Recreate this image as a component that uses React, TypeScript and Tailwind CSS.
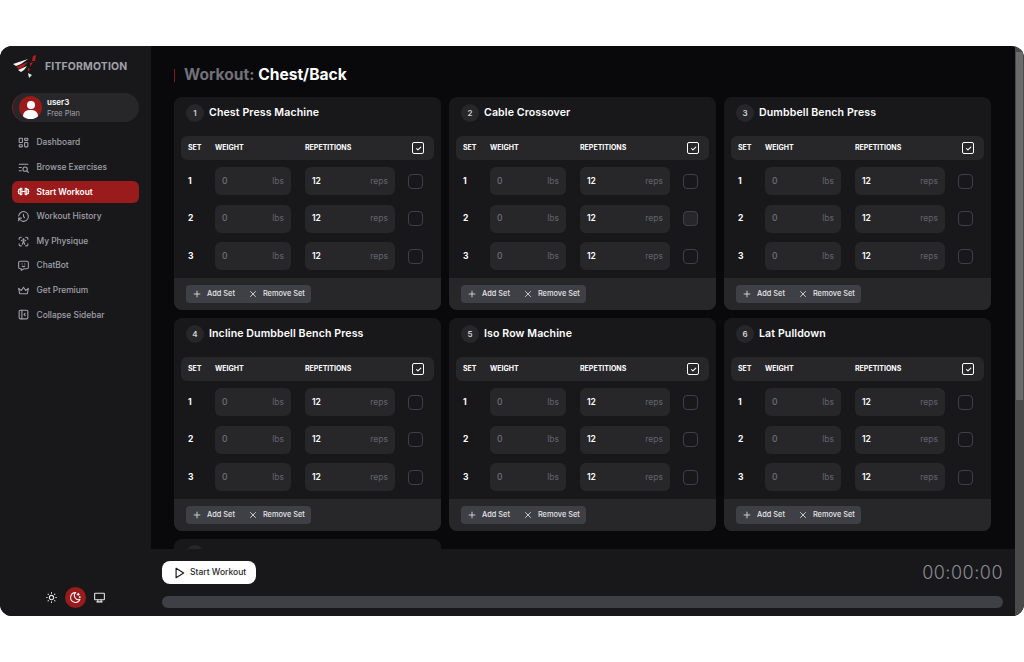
import React from 'react';
import {
  TbLayoutDashboard, TbListSearch, TbBarbell, TbHistory, TbBodyScan, TbMessageChatbot, TbCrown,
  TbLayoutSidebarLeftCollapse, TbSun, TbMoonStars, TbDeviceDesktop, TbPlayerPlay, TbPlus, TbX, TbCheck,
} from 'react-icons/tb';

const navItems = [
  { label: 'Dashboard', icon: TbLayoutDashboard },
  { label: 'Browse Exercises', icon: TbListSearch },
  { label: 'Start Workout', icon: TbBarbell, active: true },
  { label: 'Workout History', icon: TbHistory },
  { label: 'My Physique', icon: TbBodyScan },
  { label: 'ChatBot', icon: TbMessageChatbot },
  { label: 'Get Premium', icon: TbCrown },
  { label: 'Collapse Sidebar', icon: TbLayoutSidebarLeftCollapse },
];

const exercises = [
  'Chest Press Machine',
  'Cable Crossover',
  'Dumbbell Bench Press',
  'Incline Dumbbell Bench Press',
  'Iso Row Machine',
  'Lat Pulldown',
];

function Logo() {
  return (
    <svg width="24" height="23" viewBox="0 0 24 23" className="shrink-0">
      <polygon points="0,9 15,4 8,9 3,11" fill="#f4f4f5" />
      <polygon points="3,12 15,7 10,12 6,14" fill="#b91c1c" />
      <polygon points="5,15 14,11 11,15 8,17" fill="#f4f4f5" />
      <polygon points="20,1 23,0 22,6 19,6" fill="#b91c1c" />
      <polygon points="17,8 20,7 17,12" fill="#b91c1c" />
      <polygon points="15,13 17,14 15,17" fill="#b91c1c" />
      <polygon points="15,18 19,20 16,23" fill="#e4e4e7" />
    </svg>
  );
}

function SetRow({ n, hovered }: { n: number; hovered?: boolean }) {
  return (
    <div className="flex items-center h-[28px]">
      <span className="w-[34px] pl-[7px] text-[8.5px] font-bold text-white">{n}</span>
      <div className="w-[76px] h-full rounded-md bg-[#27272a] flex items-center justify-between px-[7px] text-[8.5px] text-[#63636b]">
        <span className="font-medium text-[#71717a]">0</span>
        <span>lbs</span>
      </div>
      <div className="ml-[14px] w-[90px] h-full rounded-md bg-[#27272a] flex items-center justify-between px-[7px] text-[8.5px] text-[#63636b]">
        <span className="text-white font-semibold">12</span>
        <span>reps</span>
      </div>
      <div className={`ml-[13px] w-[15px] h-[15px] rounded-[4px] border border-[#3f3f46] ${hovered ? 'bg-[#27272a]' : ''}`} />
    </div>
  );
}

function ExerciseCard({ n, name, hoveredSet }: { n: number; name: string; hoveredSet?: number }) {
  return (
    <div className="rounded-lg bg-[#18181b] flex flex-col h-[213px] overflow-hidden">
      <div className="flex items-center gap-[5px] pl-[12px] pt-[1px] h-[39px] pb-[9px] shrink-0">
        <span className="w-[18px] h-[18px] rounded-full bg-[#27272a] flex items-center justify-center text-[8px] font-semibold text-[#d4d4d8]">{n}</span>
        <span className="text-[10.6px] font-semibold text-white tracking-[0.1px]">{name}</span>
      </div>
      <div className="mx-[7px] h-[24px] rounded-md bg-[#27272a] flex items-center text-[7px] font-bold text-white shrink-0">
        <span className="w-[34px] pl-[7px] pt-[1px]">SET</span>
        <span className="w-[90px] pt-[1px]">WEIGHT</span>
        <span className="w-[107px] pt-[1px]">REPETITIONS</span>
        <span className="w-[12px] h-[12px] rounded-[2px] border border-white flex items-center justify-center">
          <TbCheck size={7} strokeWidth={3.5} />
        </span>
      </div>
      <div className="mx-[7px] mt-[7px] flex flex-col gap-[9.7px] shrink-0">
        {[1, 2, 3].map((s) => (
          <SetRow key={s} n={s} hovered={hoveredSet === s} />
        ))}
      </div>
      <div className="mt-auto h-[32px] bg-[#27272a] flex items-center pl-[12px] shrink-0">
        <div className="h-[18px] w-[125px] rounded bg-[#3f3f46] flex items-center pl-[6px] text-[7.4px] font-medium text-[#e4e4e7]">
          <TbPlus size={10} className="mr-[5px]" />
          <span>Add Set</span>
          <TbX size={10} className="ml-[13px] mr-[5px]" />
          <span>Remove Set</span>
        </div>
      </div>
    </div>
  );
}

export default function App() {
  return (
    <div className="h-[662px] bg-white py-[46px] font-['Inter',sans-serif] overflow-hidden">
      <div className="h-[570px] flex rounded-xl overflow-hidden bg-[#09090b]">
        <aside className="w-[151px] shrink-0 bg-[#18181b] flex flex-col">
          <div className="flex items-center h-[47px] pl-[13px] pb-[6px] gap-[8px]">
            <Logo />
            <span className="text-[10.4px] font-bold text-[#a1a1aa] tracking-[0.2px]">FITFORMOTION</span>
          </div>
          <div className="mx-[12px] h-[29px] rounded-full bg-[#27272a] border-l border-[#7f1d1d] flex items-center pl-[6px] gap-[5px]">
            <span className="w-[23px] h-[23px] rounded-full bg-[#991b1b] overflow-hidden relative shrink-0">
              <span className="absolute left-[7.5px] top-[5px] w-[8px] h-[8px] rounded-full bg-white" />
              <span className="absolute left-[4px] top-[14px] w-[15px] h-[12px] rounded-full bg-white" />
            </span>
            <div className="flex flex-col leading-[11px]">
              <span className="text-[8px] font-semibold text-white">user3</span>
              <span className="text-[7.5px] text-[#a1a1aa]">Free Plan</span>
            </div>
          </div>
          <nav className="mt-[9.5px] mx-[12px] flex flex-col gap-[2px]">
            {navItems.map(({ label, icon: Icon, active }) => (
              <div
                key={label}
                className={`h-[22.6px] rounded-md flex items-center pl-[5px] gap-[6.5px] text-[8.4px] font-medium ${active ? 'bg-[#991b1b] text-white font-semibold' : 'text-[#a1a1aa]'}`}
              >
                <Icon size={13} className="shrink-0" />
                <span>{label}</span>
              </div>
            ))}
          </nav>
          <div className="mt-auto mb-[8px] flex items-center justify-center gap-[3px] pr-[1px]">
            <span className="w-[21px] h-[21px] flex items-center justify-center text-[#e4e4e7]"><TbSun size={13} /></span>
            <span className="w-[21px] h-[21px] rounded-full bg-[#991b1b] flex items-center justify-center text-[#f4f4f5]"><TbMoonStars size={13} /></span>
            <span className="w-[21px] h-[21px] flex items-center justify-center text-[#e4e4e7]"><TbDeviceDesktop size={13} /></span>
          </div>
        </aside>
        <main className="flex-1 min-w-0 flex flex-col">
          <div className="flex-1 min-h-0 overflow-hidden pl-[23px] pr-[24px]">
            <h1 className="h-[51px] pt-[7px] flex items-center text-[15.6px] font-bold text-[#71717a]">
              <span className="w-px h-[13px] bg-[#7f1d1d] mr-[9px]" />
              Workout:&nbsp;<span className="text-white">Chest/Back</span>
            </h1>
            <div className="grid grid-cols-3 gap-x-[8px] gap-y-[8px]">
              {exercises.map((name, i) => (
                <ExerciseCard key={name} n={i + 1} name={name} hoveredSet={i === 1 ? 2 : undefined} />
              ))}
              <div className="rounded-lg bg-[#18181b] h-[213px] pl-[12px] pt-[6px]">
                <span className="block w-[18px] h-[18px] rounded-full bg-[#27272a]" />
              </div>
            </div>
          </div>
          <div className="h-[67px] shrink-0 bg-[#18181b] pl-[11px] pr-[12px] pt-[12px] flex flex-col">
            <div className="flex items-center justify-between h-[23px]">
              <button className="h-[23px] w-[94px] rounded-lg bg-white flex items-center pl-[10px] gap-[4px] text-[8.5px] font-medium text-[#27272a]">
                <TbPlayerPlay size={14} className="text-[#18181b]" />
                Start Workout
              </button>
              <span className="text-[18px] font-light text-[#8a8a92] tracking-[0.5px]">00:00:00</span>
            </div>
            <div className="mt-[12px] h-[12px] rounded-md bg-[#3f3f46]" />
          </div>
        </main>
        {/* page scrollbar */}
        <div className="w-[9px] shrink-0 bg-[#4a4a4a] px-[1px] pt-[6px]">
          <div className="h-[348px] bg-[#6b6b6b]" />
        </div>
      </div>
    </div>
  );
}
